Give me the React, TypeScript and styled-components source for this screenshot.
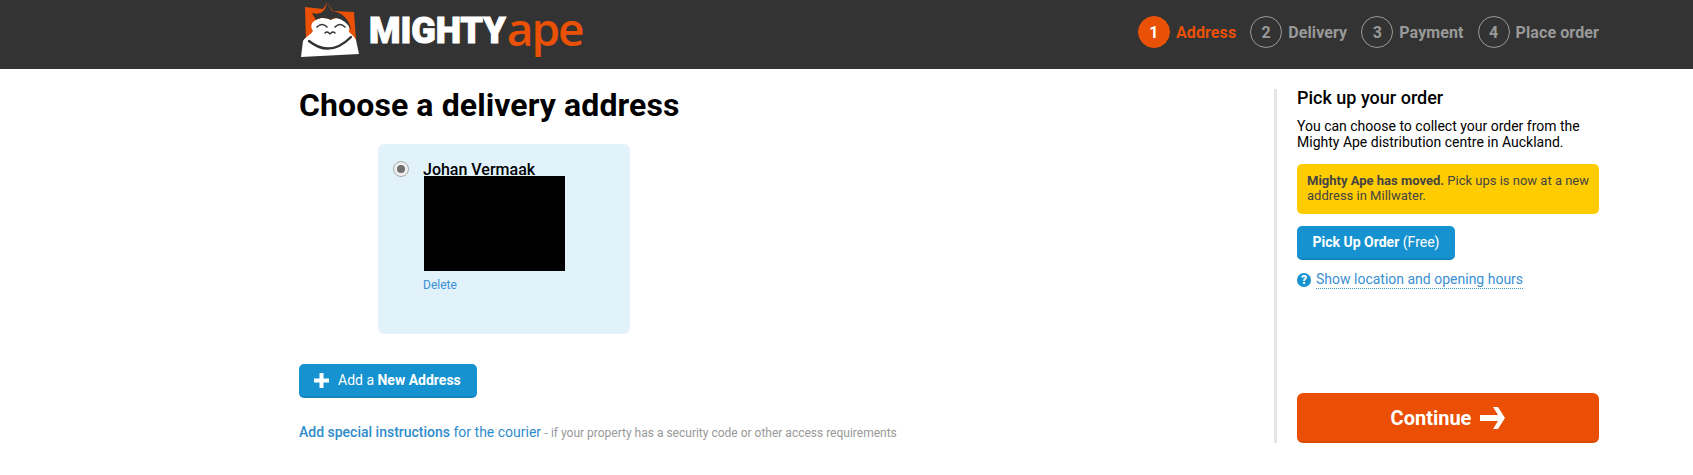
import React from "react";
import styled, { createGlobalStyle } from "styled-components";

const Global = createGlobalStyle`
  html, body { margin: 0; padding: 0; background: #fff; }
  body { font-family: Roboto, "Liberation Sans", Arial, sans-serif; color: #000; }
  * { box-sizing: border-box; }
`;

const Header = styled.header`
  height: 69px;
  background: #333;
`;
const HeaderInner = styled.div`
  width: 1300px;
  margin-left: 299px;
  height: 100%;
  display: flex;
  align-items: flex-start;
  justify-content: space-between;
`;
const Logo = styled.a`
  display: flex;
  align-items: flex-start;
  height: 60px;
`;
const LogoMark = styled.svg`
  width: 62px;
  height: 60px;
  margin-left: 1px;
  flex: none;
`;
const LogoMighty = styled.span`
  margin-left: 7px;
  margin-top: 11px;
  font-family: Roboto, sans-serif;
  font-weight: 900;
  font-size: 36px;
  line-height: 40px;
  color: #fff;
  -webkit-text-stroke: 1px #fff;
  letter-spacing: -0.1px;
`;
const LogoApe = styled.span`
  margin-left: 1px;
  font-family: "Open Sans", sans-serif;
  font-weight: 600;
  font-size: 46px;
  line-height: 56px;
  color: #ea5106;
  letter-spacing: -2px;
`;
const Steps = styled.ol`
  list-style: none;
  margin: 16px 0 0;
  padding: 0;
  display: flex;
  gap: 14px;
`;
const Step = styled.li<{ $active?: boolean }>`
  display: flex;
  align-items: center;
  gap: 6px;
  font-size: 16px;
  font-weight: 700;
  letter-spacing: 0.1px;
  color: ${(p) => (p.$active ? "#ea5106" : "#999")};
`;
const StepNumber = styled.span<{ $active?: boolean }>`
  width: 32px;
  height: 32px;
  border-radius: 50%;
  display: flex;
  align-items: center;
  justify-content: center;
  font-size: 16px;
  font-weight: 700;
  border: 1px solid ${(p) => (p.$active ? "#ea5106" : "#999")};
  background: ${(p) => (p.$active ? "#ea5106" : "transparent")};
  color: ${(p) => (p.$active ? "#fff" : "#999")};
`;

const Main = styled.main`
  width: 1300px;
  margin-left: 299px;
  display: flex;
  justify-content: space-between;
`;
const Left = styled.section`
  display: flex;
  flex-direction: column;
  align-items: flex-start;
`;
const Title = styled.h1`
  margin: 14px 0 0;
  font-size: 32px;
  line-height: 45px;
  font-weight: 700;
  letter-spacing: 0.1px;
`;
const Card = styled.div`
  margin: 16px 0 0 79px;
  width: 252px;
  height: 190px;
  border-radius: 6px;
  background: #e1f2fb;
  padding: 16px 15px;
  display: flex;
  gap: 14px;
`;
const Radio = styled.span`
  flex: none;
  width: 16px;
  height: 16px;
  margin-top: 1px;
  border-radius: 50%;
  border: 1px solid #aaa;
  background: #eee;
  display: flex;
  align-items: center;
  justify-content: center;
  &::after {
    content: "";
    width: 8px;
    height: 8px;
    border-radius: 50%;
    background: #6e6e6e;
  }
`;
const AddressBody = styled.div`
  display: flex;
  flex-direction: column;
  align-items: flex-start;
`;
const Name = styled.div`
  font-size: 16px;
  line-height: 20px;
  font-weight: 500;
  height: 16px;
  white-space: nowrap;
`;
const Redacted = styled.div`
  width: 141px;
  height: 95px;
  margin-left: 1px;
  background: #000;
`;
const DeleteLink = styled.a`
  margin-top: 7px;
  font-size: 12px;
  line-height: 14px;
  color: #3b8fd3;
`;
const AddButton = styled.button`
  margin-top: 30px;
  width: 178px;
  height: 34px;
  border: 0;
  border-bottom: 2px solid #1283bd;
  border-radius: 5px;
  background: #1592cf;
  color: #fff;
  font: 400 14px Roboto, sans-serif;
  display: flex;
  align-items: center;
  gap: 9px;
  padding: 0 0 0 15px;
  white-space: nowrap;
  b { font-weight: 700; }
`;
const Instructions = styled.p`
  margin: 24px 0 0;
  font-size: 14px;
  line-height: 20px;
  color: #2f8ccb;
  b { font-weight: 500; }
  small { font-size: 12px; color: #999; }
`;

const Side = styled.aside`
  width: 325px;
  margin-top: 20px;
  height: 354px;
  border-left: 3px solid #e5e5e5;
  padding-left: 20px;
  display: flex;
  flex-direction: column;
  align-items: flex-start;
`;
const SideTitle = styled.h2`
  margin: 0;
  font-size: 18px;
  line-height: 18px;
  font-weight: 500;
`;
const SideText = styled.p`
  margin: 11px 0 0;
  font-size: 14px;
  line-height: 16px;
`;
const Notice = styled.div`
  margin-top: 14px;
  width: 302px;
  height: 50px;
  padding: 9px 6px 9px 10px;
  border-radius: 5px;
  background: #fc0;
  color: #444;
  font-size: 13px;
  line-height: 15px;
  b { font-weight: 700; }
`;
const PickupButton = styled.button`
  margin-top: 12px;
  width: 158px;
  height: 34px;
  border: 0;
  border-bottom: 2px solid #1283bd;
  border-radius: 5px;
  background: #1592cf;
  color: #fff;
  font: 400 14px Roboto, sans-serif;
  b { font-weight: 700; }
`;
const Hint = styled.div`
  margin-top: 11px;
  display: flex;
  align-items: center;
  gap: 5px;
`;
const HintLink = styled.a`
  font-size: 14px;
  line-height: 17px;
  color: #3b8fd3;
  border-bottom: 1px dotted #3b9fd3;
`;
const ContinueButton = styled.button`
  margin-top: auto;
  width: 302px;
  height: 50px;
  border: 0;
  border-bottom: 2px solid #d94a05;
  border-radius: 6px;
  background: #ea4f05;
  color: #fff;
  font: 700 20px Roboto, sans-serif;
  display: flex;
  align-items: center;
  justify-content: center;
  gap: 9px;
  padding: 2px 0 0;
`;

const Mark = () => (
  <LogoMark viewBox="300 0 62 60">
    <path d="M305 7 L323 9 L327 3 L333 11 L354 12 L356 40 L306 42 Z" fill="#ea5106" />
    <path d="M301 57 L303 41 C306 36 311 35 313 31 C310 27 311 22 316 20 C321 17 327 18 331 20 C336 17 345 18 348 23 C350 27 349 31 349 32 C352 35 355 37 356 40 L359 54 Z" fill="#fff" />
    <path d="M312 13 C318 15 322 13 325 9 L327 3 L332 11 C342 12 350 20 351 30 C348 23 342 19 336 18 C333 18 331 19 331 20 C327 18 321 17 316 20 C315 18 313 15 312 13 Z" fill="#333" />
    <path d="M317 27 Q322 22 327 27 M335 27 Q340 22 345 27" fill="none" stroke="#333" strokeWidth="1.6" strokeLinecap="round" />
    <path d="M325 33 Q327 31 329 33 Q330 35 331 33 Q333 31 335 33" fill="none" stroke="#333" strokeWidth="1.5" strokeLinecap="round" />
    <path d="M309 41 Q330 58 351 37" fill="none" stroke="#333" strokeWidth="2.4" strokeLinecap="round" />
  </LogoMark>
);

const PlusIcon = () => (
  <svg width="15" height="15" viewBox="0 0 15 15" aria-hidden="true">
    <path d="M5.5 0h4v5.5H15v4H9.5V15h-4V9.5H0v-4h5.5z" fill="#fff" />
  </svg>
);
const HelpIcon = () => (
  <svg width="14" height="14" viewBox="0 0 14 14" aria-hidden="true">
    <circle cx="7" cy="7" r="7" fill="#1592cf" />
    <text x="7" y="11.2" textAnchor="middle" fontSize="12" fontWeight="900" fontFamily="Roboto" fill="#fff">?</text>
  </svg>
);
const ArrowIcon = () => (
  <svg width="25" height="22" viewBox="0 0 25 22" aria-hidden="true">
    <path d="M13 0h5l7 11-7 11h-5l5-8H0V8h18z" fill="#fff" />
  </svg>
);

const steps = ["Address", "Delivery", "Payment", "Place order"];

export default function App() {
  return (
    <>
      <Global />
      <Header>
        <HeaderInner>
          <Logo>
            <Mark />
            <LogoMighty>MIGHTY</LogoMighty>
            <LogoApe>ape</LogoApe>
          </Logo>
          <Steps>
            {steps.map((s, i) => (
              <Step key={s} $active={i === 0}>
                <StepNumber $active={i === 0}>{i + 1}</StepNumber>
                {s}
              </Step>
            ))}
          </Steps>
        </HeaderInner>
      </Header>
      <Main>
        <Left>
          <Title>Choose a delivery address</Title>
          <Card>
            <Radio />
            <AddressBody>
              <Name>Johan Vermaak</Name>
              <Redacted />
              <DeleteLink>Delete</DeleteLink>
            </AddressBody>
          </Card>
          <AddButton>
            <PlusIcon />
            <span>Add a <b>New Address</b></span>
          </AddButton>
          <Instructions>
            <b>Add special instructions</b> for the courier <small>- if your property has a security code or other access requirements</small>
          </Instructions>
        </Left>
        <Side>
          <SideTitle>Pick up your order</SideTitle>
          <SideText>You can choose to collect your order from the<br />Mighty Ape distribution centre in Auckland.</SideText>
          <Notice><b>Mighty Ape has moved.</b> Pick ups is now at a new address in Millwater.</Notice>
          <PickupButton><b>Pick Up Order</b> (Free)</PickupButton>
          <Hint>
            <HelpIcon />
            <HintLink>Show location and opening hours</HintLink>
          </Hint>
          <ContinueButton>Continue <ArrowIcon /></ContinueButton>
        </Side>
      </Main>
    </>
  );
}
